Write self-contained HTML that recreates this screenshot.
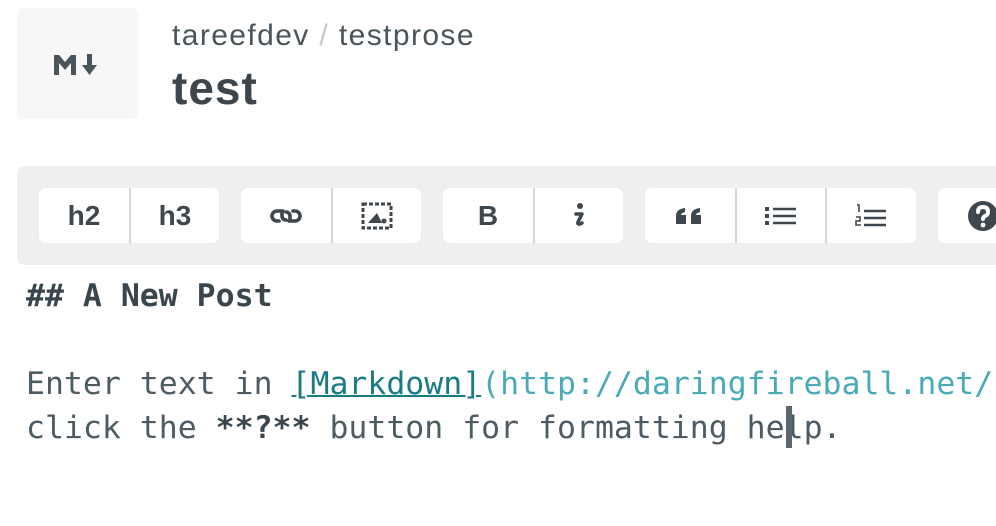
<!DOCTYPE html>
<html><head><meta charset="utf-8"><style>
*{margin:0;padding:0;box-sizing:border-box}
body{width:996px;height:526px;overflow:hidden;background:#fff;position:relative;font-family:"Liberation Sans",sans-serif;color:#3f4a50}
.logo{position:absolute;left:17px;top:8px;width:121px;height:111px;background:#f7f7f7;border-radius:7px}
.crumb{position:absolute;left:172px;top:19px;font-size:30px;letter-spacing:1.4px;color:#4a555b;white-space:nowrap}
.crumb .s{color:#c8c8c8}
.title{position:absolute;left:172px;top:61px;font-size:46px;letter-spacing:1px;font-weight:bold;color:#3d464c}
.tb{position:absolute;left:17px;top:166px;width:1000px;height:99px;background:#efefef;border-radius:8px}
.g{position:absolute;top:188px;height:55px;background:#fff;border-radius:7px;display:flex}
.b{width:90px;height:55px;display:flex;align-items:center;justify-content:center;border-left:2px solid #d6d6d6;font-weight:bold;font-size:28px;color:#3d474d}
.b:first-child{border-left:none}
.ed{position:absolute;left:26px;top:274px;font-family:"DejaVu Sans Mono",monospace;font-size:31.5px;line-height:44px;color:#4d5b63;white-space:pre}
.h{font-weight:bold;color:#3a464d}
.lk{color:#1b7b83;text-decoration:underline;text-decoration-thickness:2px}
.u{color:#4aabb7}
.cur{position:absolute;left:786px;top:406px;width:6px;height:42px;background:#5a6870}
</style></head><body>
<div class="logo"><svg style="position:absolute;left:35px;top:44px" width="52" height="26" viewBox="0 0 52 26"><path d="M2 23V3h5l6 7 6-7h5v20h-5V11l-6 7-6-7v12z" fill="#4a555b"/><path d="M35 2h5v11h5l-7.5 10L30 13h5z" fill="#4a555b"/></svg></div>
<div class="crumb">tareefdev <span class="s">/</span> testprose</div>
<div class="title">test</div>
<div class="tb"></div>
<div class="g" style="left:39px;width:180px"><div class="b">h2</div><div class="b">h3</div></div>
<div class="g" style="left:241px;width:180px"><div class="b"><svg width="32" height="22" viewBox="0 0 32 22"><path d="M13 6H7a5 5 0 0 0 0 10h2M19 16h6a5 5 0 0 0 0-10h-2M12 8v3a4 4 0 0 0 4 4M20 14v-3a4 4 0 0 0-4-4" fill="none" stroke="#3d474d" stroke-width="3.6" stroke-linecap="round"/></svg></div><div class="b"><svg width="34" height="30" viewBox="0 0 34 30"><rect x="3" y="3" width="28" height="24" fill="none" stroke="#3d474d" stroke-width="3" stroke-dasharray="4 2"/><path d="M8 22l9-10 5 10z" fill="#3d474d"/><circle cx="24" cy="20" r="2.5" fill="#3d474d"/></svg></div></div>
<div class="g" style="left:443px;width:180px"><div class="b">B</div><div class="b"><svg width="14" height="28" viewBox="0 0 14 28"><circle cx="8" cy="4" r="3" fill="#3d474d"/><path d="M4 12h6l-4 8c-1 2 1 3 4 1" fill="none" stroke="#3d474d" stroke-width="3.5" stroke-linecap="round" stroke-linejoin="round"/></svg></div></div>
<div class="g" style="left:645px;width:271px"><div class="b"><svg width="30" height="18" viewBox="0 0 30 18"><path d="M1 9q0-7 9-8v4q-4 1-4 3h5v9H1zM16 9q0-7 9-8v4q-4 1-4 3h5v9H16z" fill="#3d474d"/></svg></div><div class="b"><svg width="32" height="20" viewBox="0 0 32 20"><rect x="0" y="1" width="4" height="4" fill="#3d474d"/><rect x="0" y="8" width="4" height="4" fill="#3d474d"/><rect x="0" y="15" width="4" height="4" fill="#3d474d"/><path d="M8 3h23M8 10h23M8 17h23" stroke="#3d474d" stroke-width="2.4"/></svg></div><div class="b"><svg width="32" height="26" viewBox="0 0 32 26"><path d="M2 2h2v7M1 14h4v4H1v4h5" fill="none" stroke="#3d474d" stroke-width="1.6"/><path d="M9 8h22M9 15h22M9 22h22" stroke="#3d474d" stroke-width="2.4"/></svg></div></div>
<div class="g" style="left:938px;width:90px"><div class="b"><svg width="32" height="32" viewBox="0 0 32 32"><circle cx="16" cy="16" r="15" fill="#3d474d"/><path d="M11 12q0-5 5-5t5 5q0 3-3 4-2 1-2 3" fill="none" stroke="#fff" stroke-width="4" stroke-linecap="round"/><circle cx="16" cy="25" r="2.4" fill="#fff"/></svg></div></div>
<div class="ed"><span class="h">## A New Post</span>

Enter text in <span class="lk">[Markdown]</span><span class="u">(http://daringfireball.net/</span>
click the <span class="h">**?**</span> button for formatting help.</div>
<div class="cur"></div>
</body></html>
